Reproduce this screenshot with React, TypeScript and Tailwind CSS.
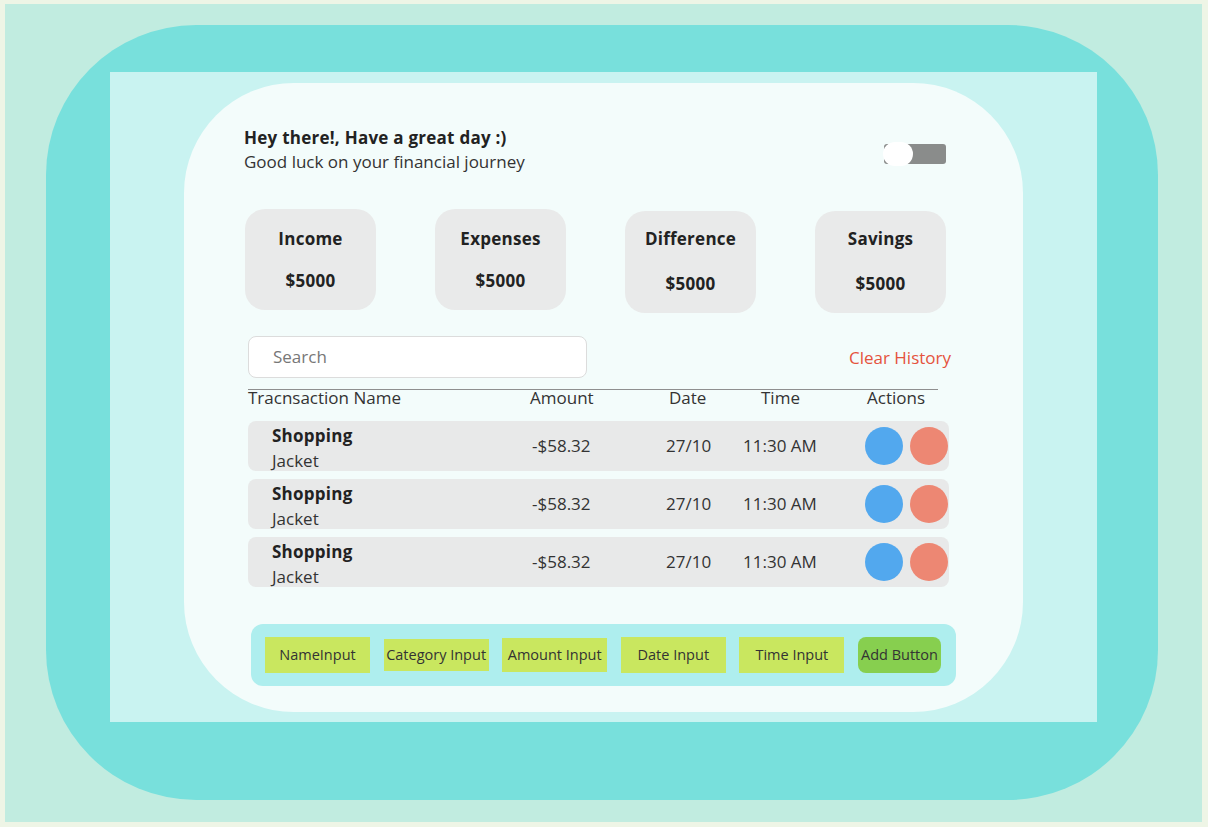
import React from 'react';

const stats = [
  { label: 'Income', value: '$5000', tall: false },
  { label: 'Expenses', value: '$5000', tall: false },
  { label: 'Difference', value: '$5000', tall: true },
  { label: 'Savings', value: '$5000', tall: true },
];

const rows = [1, 2, 3];

const inputs = [
  { label: 'NameInput', h: 'h-[36px]' },
  { label: 'Category Input', h: 'h-[32px]' },
  { label: 'Amount Input', h: 'h-[34px]' },
  { label: 'Date Input', h: 'h-[36px]' },
  { label: 'Time Input', h: 'h-[36px]' },
];

function Toggle() {
  return (
    <div className="relative mt-[17px] mr-[1px] h-[22px] w-[63px]">
      <div className="absolute left-[1px] top-[1px] h-[20px] w-[62px] rounded-[3px] bg-[#8a8c8b]" />
      <div className="absolute left-0 top-[-1px] h-[24px] w-[30px] rounded-full bg-white" />
    </div>
  );
}

function StatCard({ label, value, tall }: { label: string; value: string; tall: boolean }) {
  return (
    <div
      className={
        tall
          ? 'mt-[2px] flex h-[102px] w-[131px] flex-col items-center rounded-[20px] bg-[#e9eaea] pt-[16px]'
          : 'flex h-[101px] w-[131px] flex-col items-center rounded-[20px] bg-[#e9eaea] pt-[18px]'
      }
    >
      <p className="text-[17px] font-bold leading-[24px] tracking-[0.25px] text-[#222]">{label}</p>
      <p className={`${tall ? 'mt-[21px]' : 'mt-[18px]'} text-[17px] font-bold leading-[24px] tracking-[0.25px] text-[#222]`}>
        {value}
      </p>
    </div>
  );
}

function TransactionRow() {
  return (
    <div className="flex h-[50px] w-[701px] items-center rounded-[8px] bg-[#e8e9e9] pl-[24px] text-[17px] text-[#333]">
      <div className="w-[260px] pt-[3px]">
        <p className="font-bold leading-[25px] tracking-[0.25px] text-[#222]">Shopping</p>
        <p className="leading-[25px]">Jacket</p>
      </div>
      <div className="w-[134px]">-$58.32</div>
      <div className="w-[77px]">27/10</div>
      <div className="w-[122px]">11:30 AM</div>
      <div className="flex gap-[7px]">
        <div className="h-[38px] w-[38px] rounded-full bg-[#52a8ee]" />
        <div className="h-[38px] w-[38px] rounded-full bg-[#ed8773]" />
      </div>
    </div>
  );
}

export default function App() {
  return (
    <div className="h-[827px] w-[1208px] bg-[#eef5e6] pl-[5px] pt-[4px] font-['Open_Sans',sans-serif]">
      <div className="h-[818px] w-[1197px] bg-[#c1ece0] pl-[41px] pt-[21px]">
        <div className="h-[775px] w-[1112px] rounded-[150px] bg-[#78e0dc] pl-[64px] pt-[47px]">
          <div className="h-[650px] w-[987px] bg-[#c9f3f1] px-[74px] pt-[11px]">
            <div className="h-[629px] w-[839px] rounded-[110px] bg-[#f3fcfb] pl-[60px] pt-[43px]">
              <div className="flex w-[703px] justify-between">
                <div>
                  <p className="text-[17px] font-bold leading-[24px] tracking-[0.25px] text-[#222]">
                    Hey there!, Have a great day :)
                  </p>
                  <p className="text-[17px] leading-[24px] text-[#333]">Good luck on your financial journey</p>
                </div>
                <Toggle />
              </div>

              <div className="ml-[1px] mt-[35px] flex w-[701px] items-start justify-between">
                {stats.map((s) => (
                  <StatCard key={s.label} {...s} />
                ))}
              </div>

              <div className="ml-[4px] mt-[23px] flex w-[703px] items-center justify-between">
                <div className="flex h-[42px] w-[339px] items-center rounded-[8px] border border-[#dcdcdc] bg-white pl-[24px] text-[17px] text-[#777]">
                  Search
                </div>
                <span className="mt-[2px] text-[17px] leading-[24px] text-[#e5533d]">Clear History</span>
              </div>

              <div className="ml-[4px] mt-[11px] h-px w-[690px] bg-[#8f8f8f]" />
              <div className="ml-[4px] -mt-px flex text-[17px] leading-[18px] text-[#333]">
                <div className="w-[282px]">Tracnsaction Name</div>
                <div className="w-[139px]">Amount</div>
                <div className="w-[92px]">Date</div>
                <div className="w-[106px]">Time</div>
                <div>Actions</div>
              </div>

              <div className="ml-[4px] mt-[14px] flex flex-col gap-[8px]">
                {rows.map((r) => (
                  <TransactionRow key={r} />
                ))}
              </div>

              <div className="ml-[7px] mt-[37px] flex h-[62px] w-[705px] items-center gap-[13.6px] rounded-[12px] bg-[#aeeeee] pl-[14px]">
                {inputs.map((i) => (
                  <div
                    key={i.label}
                    className={`flex w-[105px] items-center justify-center bg-[#c9e75f] text-[14.5px] text-[#333] ${i.h}`}
                  >
                    {i.label}
                  </div>
                ))}
                <div className="flex h-[36px] w-[83px] items-center justify-center rounded-[8px] bg-[#87cf4f] text-[14.5px] text-[#333]">
                  Add Button
                </div>
              </div>
            </div>
          </div>
        </div>
      </div>
    </div>
  );
}
